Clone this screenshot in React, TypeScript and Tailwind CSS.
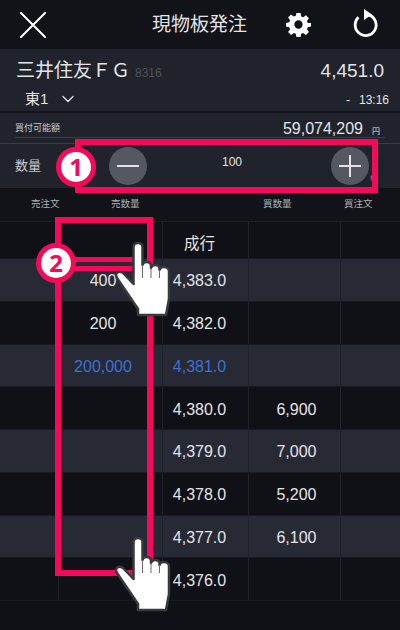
import React from 'react';
import { ChevronDown } from 'lucide-react';

const rows = [
  { sell: '', price: '成行', buy: '', tone: 'dark', first: true },
  { sell: '400', price: '4,383.0', buy: '', tone: 'light' },
  { sell: '200', price: '4,382.0', buy: '', tone: 'dark' },
  { sell: '200,000', price: '4,381.0', buy: '', tone: 'light', blue: true },
  { sell: '', price: '4,380.0', buy: '6,900', tone: 'dark' },
  { sell: '', price: '4,379.0', buy: '7,000', tone: 'light' },
  { sell: '', price: '4,378.0', buy: '5,200', tone: 'dark' },
  { sell: '', price: '4,377.0', buy: '6,100', tone: 'light' },
  { sell: '', price: '4,376.0', buy: '', tone: 'dark' },
];

// pointing hand used by both gesture marks
const Hand = ({ className }: { className: string }) => (
  <svg viewBox="0 0 56 76" className={className}>
    <path
      d="M18.500 5c0-5.500 9-5.500 9 0v18c0-4 8-4 8.500 0v3c.5-4 8-4 8.500 0v2c.5-4 9-4 9.500 1v28l-3 16H23v-6L2 36c-3-5 2-8 6-5l10.500 11Z"
      fill="#fff"
      stroke="#38393d"
      strokeWidth="2.500"
      strokeLinejoin="round"
    />
    <path d="M27.500 23v13M36 26v10M44.500 28v8" stroke="#6a6a6e" strokeWidth="1" />
  </svg>
);

const Badge = ({ n, className }: { n: string; className: string }) => (
  <div
    className={`absolute flex h-10 w-10 items-center justify-center rounded-full border-[5px] border-[#f50a5a] bg-white font-['Open_Sans',sans-serif] text-[24px] font-bold leading-none text-[#f50a5a] ${className}`}
  >
    {n}
  </div>
);

export default function App() {
  return (
    <div className="relative h-[630px] w-[400px] overflow-hidden bg-[#101116] font-['Liberation_Sans','Noto_Sans_CJK_JP',sans-serif] text-[#e4e4e6]">
      {/* header */}
      <div className="flex h-[49px] items-center bg-[#121318]">
        <svg viewBox="0 0 26 26" className="ml-[20px] h-[26px] w-[26px]" stroke="#fff" strokeWidth="2" strokeLinecap="round">
          <path d="M1 1l24 24M25 1L1 25" />
        </svg>
        <div className="ml-[106px] text-[19px] leading-none">現物板発注</div>
        <svg viewBox="0 0 24 24" className="ml-[39px] h-[25px] w-[25px]" fill="#fff">
          <path
            fillRule="evenodd"
            d="M10 1h4l.6 3.200 1.900.8 2.700-1.900 2.800 2.800-1.900 2.700.8 1.900L24 10.500v3.500l-3.100.6-.8 1.900 1.900 2.700-2.800 2.800-2.700-1.900-1.900.8L14 24h-4l-.6-3.100-1.900-.8-2.700 1.900L2 19.200l1.900-2.700-.8-1.900L0 14v-3.500l3.100-.6.8-1.900L2 5.300 4.800 2.500l2.700 1.900 1.900-.8ZM12 8a4 4 0 1 0 0 8 4 4 0 0 0 0-8Z"
          />
        </svg>
        <svg viewBox="0 0 26 28" className="-mt-[3px] ml-[42px] h-[28px] w-[26px]" fill="none" stroke="#fff" strokeWidth="2.800">
          <path d="M5.500 8.300A10.500 10.500 0 1 0 13 5.500" />
          <path d="M11 0v11l8-5.500Z" fill="#fff" stroke="none" />
        </svg>
      </div>

      {/* issue info */}
      <div className="h-[62px] bg-[#20232c] pl-[16px] pr-[16px]">
        <div className="flex items-baseline justify-between pt-[8px]">
          <div className="flex items-baseline">
            <span className="text-[19px] leading-[28px]">三井住友ＦＧ</span>
            <span className="ml-[5px] text-[12px] text-[#4e515a]">8316</span>
          </div>
          <span className="text-[19px] leading-[28px]">4,451.0</span>
        </div>
        <div className="flex items-center justify-between pt-[2px]">
          <div className="flex items-center pl-[9px]">
            <span className="text-[15px] leading-[20px]">東1</span>
            <ChevronDown size={20} strokeWidth={1.6} className="ml-[10px]" />
          </div>
          <span className="mr-[-5px] mt-[3px] text-[12px] leading-[20px]">
            <span className="mr-[9px]">-</span>13:16
          </span>
        </div>
      </div>

      {/* buying power and quantity */}
      <div className="h-[32px] border-t-2 border-[#15161b] bg-[#20232c]">
        <div className="mx-[15px] flex h-[25px] items-center justify-between border-b border-[#3a3d46] pt-[7px]">
          <span className="text-[9px] text-[#c8c9cc]">買付可能額</span>
          <span className="pr-[5px] text-[16px]">
            59,074,209<span className="ml-[9px] text-[8px]">円</span>
          </span>
        </div>
      </div>
      <div className="flex h-[45px] items-center border-t border-[#3a3d46] bg-[#20232c] pl-[15px] pr-[24px]">
        <span className="w-[94px] text-[13px] text-[#c8c9cc]">数量</span>
        <div className="flex h-[38px] w-[38px] items-center justify-center rounded-full bg-[#555761]">
          <div className="h-[2px] w-[22px] bg-[#e4e4e6]" />
        </div>
        <span className="mb-[8px] flex-1 pr-[14px] text-center text-[12px]">100</span>
        <div className="relative flex h-[38px] w-[38px] items-center justify-center rounded-full bg-[#555761]">
          <div className="h-[2px] w-[22px] bg-[#e4e4e6]" />
          <div className="absolute h-[22px] w-[2px] bg-[#e4e4e6]" />
        </div>
        <span className="ml-[1px] mt-[24px] w-[6px] text-[6px] text-[#85878e]">株</span>
      </div>

      {/* column titles */}
      <div className="grid h-[33px] grid-cols-[45px_92px_112px_56px_95px] items-center bg-[#121318] text-[9.500px] text-[#b0b1b5]">
        <span className="whitespace-nowrap pl-[31px]">売注文</span>
        <span className="whitespace-nowrap pl-[66px]">売数量</span>
        <span />
        <span className="whitespace-nowrap pl-[14px]">買数量</span>
        <span className="whitespace-nowrap pl-[39px]">買注文</span>
      </div>

      {/* order book */}
      <div className="border-t border-[#1d1f26]">
        {rows.map(row => (
          <div
            key={row.price}
            className={`grid grid-cols-[59px_104px_86px_92px_59px] border-b border-[#181a20] text-[16px] ${row.tone === 'light' ? 'bg-[#272a35]' : 'bg-[#101116]'} ${row.first ? 'h-[37px]' : 'h-[42.750px]'}`}
          >
            <div className="border-r border-[#20222a]" />
            <div className={`flex items-center justify-center border-r border-[#20222a] pr-[15px] pt-[3px] ${row.blue ? 'text-[#3f6fd0]' : ''}`}>
              {row.sell}
            </div>
            <div className={`flex items-center justify-center border-r border-[#20222a] pr-[12px] pt-[3px] ${row.blue ? 'text-[#3f6fd0]' : ''} ${row.first ? 'pt-[7px] text-[15.500px]' : ''}`}>
              {row.price}
            </div>
            <div className="flex items-center justify-center border-r border-[#20222a] pl-[4px] pt-[3px]">{row.buy}</div>
            <div />
          </div>
        ))}
      </div>

      {/* annotations drawn over the screen */}
      <div className="absolute left-[75px] top-[139px] h-[54px] w-[303px] border-[6px] border-[#f50a5a]" />
      <Badge n="1" className="left-[56px] top-[147px]" />
      <div className="absolute left-[55px] top-[217px] h-[359px] w-[98px] border-[6px] border-[#f50a5a]" />
      <div className="absolute left-[60px] top-[257px] h-[14px] w-[80px] border-y-[5px] border-[#f50a5a]" />
      <Badge n="2" className="left-[36px] top-[243px]" />
      <Hand className="absolute left-[115px] top-[242px] h-[76px] w-[56px]" />
      <Hand className="absolute left-[115px] top-[537px] h-[76px] w-[56px]" />
    </div>
  );
}
